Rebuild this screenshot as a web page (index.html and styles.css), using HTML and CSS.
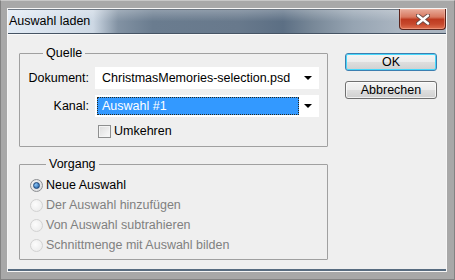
FILE: index.html
```html
<!DOCTYPE html>
<html>
	<head>
		<meta charset='utf-8'>
		<title>Auswahl laden</title>
		<link rel="stylesheet" href="styles.css">
	</head>
	<body>
		<div class='window'>
			<div class='frame'>
				<div class='titlebar'>
					<span class='title'>Auswahl laden</span>
					<button class='close'>
						<svg width='14' height='11' viewBox='0 0 14 11'>
							<path d='M2,1.5 L12,9.5 M12,1.5 L2,9.5' stroke='#6b4a44' stroke-width='4.2' stroke-linecap='round'/>
							<path d='M2,1.5 L12,9.5 M12,1.5 L2,9.5' stroke='#ffffff' stroke-width='2.4' stroke-linecap='round'/>
						</svg>
					</button>
				</div>
				<div class='dialog'>
					<div class='groups'>
						<fieldset class='group source'>
							<legend>Quelle</legend>
							<div class='form-grid'>
								<label>Dokument:</label>
								<div class='select'>
									<span class='value'>ChristmasMemories-selection.psd</span>
									<span class='arrow'></span>
								</div>
								<label>Kanal:</label>
								<div class='select'>
									<span class='value selected'>Auswahl #1</span>
									<span class='arrow'></span>
								</div>
								<span></span>
								<label class='check'><span class='checkbox'></span>Umkehren</label>
							</div>
						</fieldset>
						<fieldset class='group operation'>
							<legend>Vorgang</legend>
							<div class='radio-row'><span class='radio checked'></span>Neue Auswahl</div>
							<div class='radio-row disabled'><span class='radio'></span>Der Auswahl hinzufügen</div>
							<div class='radio-row disabled'><span class='radio'></span>Von Auswahl subtrahieren</div>
							<div class='radio-row disabled'><span class='radio'></span>Schnittmenge mit Auswahl bilden</div>
						</fieldset>
					</div>
					<div class='actions'>
						<button class='btn default'>OK</button>
						<button class='btn'>Abbrechen</button>
					</div>
				</div>
				<div class='bottom-line'></div>
			</div>
		</div>
	</body>
</html>
```

FILE: styles.css
```css
:root {
	--face: rgb(239, 239, 239);
	--text: rgb(0, 0, 0);
	--disabled: rgb(128, 128, 128);
	--group-border: rgb(160, 160, 160);
	--highlight: rgb(51, 153, 255);
}
html, body {
	margin: 0;
	padding: 0;
	font-family: "Liberation Sans", Arial, sans-serif;
	font-size: 12.5px;
	color: var(--text);
}
.window {
	width: 455px;
	height: 280px;
	box-sizing: border-box;
	background-color: rgb(168, 168, 168);
	border: 1px solid rgb(130, 130, 130);
	border-top-color: rgb(200, 200, 200);
	padding: 7px 7px 7px 6px;
}
.frame {
	height: 100%;
	box-sizing: border-box;
	border: 1px solid rgb(246, 246, 246);
	display: flex;
	flex-direction: column;
	background-color: var(--face);
}
.titlebar {
	height: 25px;
	box-sizing: border-box;
	display: flex;
	align-items: flex-start;
	border-top: 1px solid rgb(110, 120, 132);
	border-bottom: 1px solid rgb(70, 84, 100);
	background:
		linear-gradient(to bottom, rgba(255, 255, 255, 0.25), rgba(255, 255, 255, 0) 50%),
		linear-gradient(to right, rgb(226, 235, 245) 0, rgb(205, 216, 228) 85px, rgb(130, 146, 163) 110px, rgb(106, 124, 143) 145px, rgb(104, 121, 140) 230px, rgb(92, 111, 132) 275px, rgb(120, 136, 152) 305px, rgb(150, 164, 178) 345px, rgb(170, 181, 193) 390px);
}
.title {
	padding: 4px 0 0 1px;
	line-height: 15px;
}
.close {
	margin-left: auto;
	margin-top: -1px;
	width: 47px;
	height: 21px;
	padding: 0;
	border: 1px solid rgb(90, 36, 28);
	border-top: 0;
	border-radius: 0 0 4px 4px;
	display: flex;
	align-items: center;
	justify-content: center;
	background: linear-gradient(to bottom, rgb(232, 172, 156) 0, rgb(216, 120, 96) 40%, rgb(190, 58, 32) 52%, rgb(198, 72, 44) 75%, rgb(222, 112, 80) 100%);
	box-shadow: inset 0 0 0 1px rgba(255, 190, 170, 0.45);
}
.dialog {
	flex: 1;
	display: flex;
	padding: 11px 9px 0 11px;
	border-top: 1px solid rgb(250, 250, 250);
}
.groups {
	width: 309px;
}
.group {
	margin: 0;
	border: 1px solid var(--group-border);
	border-radius: 1px;
}
.group legend {
	margin-left: 16px;
	padding: 0 3px;
	line-height: 14px;
}
.source {
	padding: 7px 8px 7px 7px;
}
.operation {
	margin-top: 10px;
	padding: 4px 8px 4px 10px;
}
.form-grid {
	display: grid;
	grid-template-columns: 62px 1fr;
	column-gap: 6px;
	row-gap: 6px;
	align-items: center;
}
.form-grid > label {
	justify-self: end;
}
.select {
	height: 22px;
	box-sizing: border-box;
	background-color: rgb(255, 255, 255);
	display: flex;
	align-items: center;
	padding: 2px;
}
.value {
	flex: 1;
	height: 100%;
	box-sizing: border-box;
	display: flex;
	align-items: center;
	padding-left: 4px;
	border: 1px solid transparent;
}
.value.selected {
	background-color: var(--highlight);
	color: rgb(255, 255, 255);
	border: 1px dotted rgb(40, 40, 30);
	margin-right: 19px;
	flex: 1;
}
.arrow {
	width: 0;
	height: 0;
	border-left: 4px solid transparent;
	border-right: 4px solid transparent;
	border-top: 4px solid rgb(0, 0, 0);
	margin-right: 5px;
}
.value.selected + .arrow {
	margin-left: -14px;
}
.check {
	display: flex;
	align-items: center;
	margin-left: 3px;
	height: 16px;
}
.form-grid > .check {
	justify-self: start;
}
.checkbox {
	width: 13px;
	height: 13px;
	box-sizing: border-box;
	border: 1px solid rgb(142, 143, 143);
	background: linear-gradient(135deg, rgb(220, 220, 220), rgb(250, 250, 250));
	box-shadow: inset 0 0 0 1px rgb(244, 244, 244);
	margin-right: 3px;
}
.radio-row {
	height: 20px;
	display: flex;
	align-items: center;
}
.radio-row.disabled {
	color: var(--disabled);
}
.radio {
	width: 13px;
	height: 13px;
	box-sizing: border-box;
	border-radius: 50%;
	border: 1px solid rgb(210, 210, 210);
	background: radial-gradient(circle at 40% 40%, rgb(252, 252, 252), rgb(232, 232, 232));
	margin-right: 3px;
	display: flex;
	align-items: center;
	justify-content: center;
}
.radio.checked {
	border-color: rgb(140, 142, 145);
	background: radial-gradient(circle at 40% 40%, rgb(250, 250, 250), rgb(210, 212, 215));
}
.radio.checked::after {
	content: "";
	width: 5px;
	height: 5px;
	border-radius: 50%;
	background: radial-gradient(circle at 35% 35%, rgb(140, 200, 250), rgb(20, 80, 150));
	border: 1px solid rgb(30, 70, 120);
}
.actions {
	display: flex;
	flex-direction: column;
	gap: 10px;
	margin-left: 17px;
	padding-top: 7px;
}
.btn {
	width: 92px;
	height: 18px;
	padding: 0;
	font-family: "Liberation Sans", Arial, sans-serif;
	font-size: 12.5px;
	color: var(--text);
	border: 1px solid rgb(112, 112, 112);
	border-radius: 3px;
	background: linear-gradient(to bottom, rgb(244, 244, 244) 0, rgb(236, 236, 236) 48%, rgb(222, 222, 222) 52%, rgb(208, 208, 208) 100%);
	box-shadow: inset 0 0 0 1px rgba(255, 255, 255, 0.7);
}
.btn.default {
	border-color: rgb(60, 127, 177);
	box-shadow: inset 0 0 0 1px rgb(72, 216, 251);
}
.bottom-line {
	height: 2px;
	background-color: rgb(88, 108, 128);
}
```
